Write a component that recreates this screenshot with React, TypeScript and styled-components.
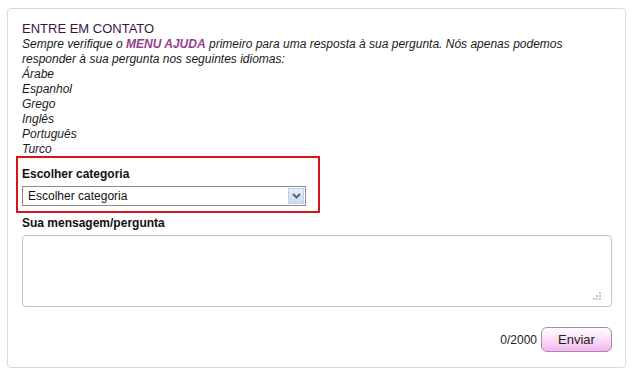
import styled, { createGlobalStyle } from 'styled-components';

const GlobalStyle = createGlobalStyle`
  html, body {
    margin: 0;
    padding: 0;
    background: #ffffff;
  }
  body {
    font-family: "Liberation Sans", Arial, sans-serif;
  }
`;

const Card = styled.div`
  margin: 8px 0 0 7px;
  width: 619px;
  height: 360px;
  box-sizing: border-box;
  border: 1px solid #d9d9d9;
  border-radius: 4px;
  padding: 12px 14px 0 14px;
  display: flex;
  flex-direction: column;
`;

const Title = styled.h2`
  margin: 0;
  font-size: 13px;
  line-height: 16px;
  font-weight: normal;
  color: #3c1640;
`;

const Intro = styled.p`
  margin: 0;
  font-size: 12px;
  line-height: 15px;
  font-style: italic;
  color: #1a1a1a;
`;

const HelpLink = styled.a`
  color: #93408f;
  font-weight: bold;
  text-decoration: none;
`;

const LangList = styled.ul`
  list-style: none;
  margin: 0;
  padding: 0;
  font-size: 12px;
  line-height: 15px;
  font-style: italic;
  color: #1a1a1a;
`;

const Highlight = styled.div`
  margin: -1px 0 0 -6px;
  width: 304px;
  height: 57px;
  box-sizing: border-box;
  border: 2px solid #d8141b;
  padding: 9px 4px 0 4px;
`;

const Label = styled.div`
  font-size: 12px;
  line-height: 15px;
  font-weight: bold;
  color: #111;
`;

const SelectBox = styled.div`
  margin-top: 4px;
  width: 284px;
  height: 20px;
  box-sizing: border-box;
  border: 1px solid #8c8c8c;
  display: flex;
  align-items: center;
  justify-content: space-between;
  padding: 0 1px 0 5px;
  font-size: 12px;
  color: #111;
`;

const ArrowButton = styled.span`
  width: 16px;
  height: 16px;
  box-sizing: border-box;
  border: 1px solid #c3cfe4;
  background: linear-gradient(#e9eff9, #cdd9ef);
  display: flex;
  align-items: center;
  justify-content: center;
`;

const MessageLabel = styled(Label)`
  margin-top: 3px;
`;

const TextArea = styled.div`
  position: relative;
  margin-top: 4px;
  width: 590px;
  height: 72px;
  box-sizing: border-box;
  border: 1px solid #c4c4c4;
  border-radius: 4px;
`;

const Grip = styled.svg`
  position: absolute;
  right: 9px;
  bottom: 5px;
`;

const Footer = styled.div`
  margin-top: 20px;
  width: 590px;
  display: flex;
  justify-content: flex-end;
  align-items: center;
  gap: 4px;
`;

const Counter = styled.span`
  font-size: 12px;
  color: #222;
`;

const SendButton = styled.button`
  width: 71px;
  height: 25px;
  box-sizing: border-box;
  border: 1px solid #b583b3;
  border-radius: 6px;
  background: linear-gradient(#ffffff 0%, #fbe4f8 40%, #f2b8ec 100%);
  font-family: "Liberation Sans", Arial, sans-serif;
  font-size: 13px;
  color: #222;
  padding: 0;
`;

const languages = ['Árabe', 'Espanhol', 'Grego', 'Inglês', 'Português', 'Turco'];

export default function App() {
  return (
    <>
      <GlobalStyle />
      <Card>
        <Title>ENTRE EM CONTATO</Title>
        <Intro>
          Sempre verifique o <HelpLink href="#">MENU AJUDA</HelpLink> primeiro para uma resposta à sua
          pergunta. Nós apenas podemos
          <br />
          responder à sua pergunta nos seguintes idiomas:
        </Intro>
        <LangList>
          {languages.map((l) => (
            <li key={l}>{l}</li>
          ))}
        </LangList>
        <Highlight>
          <Label>Escolher categoria</Label>
          <SelectBox>
            <span>Escolher categoria</span>
            <ArrowButton>
              <svg width="9" height="6" viewBox="0 0 9 6">
                <path d="M1 1 L4.5 4.5 L8 1" fill="none" stroke="#4d6185" strokeWidth="1.8" />
              </svg>
            </ArrowButton>
          </SelectBox>
        </Highlight>
        <MessageLabel>Sua mensagem/pergunta</MessageLabel>
        <TextArea>
          <Grip width="9" height="9" viewBox="0 0 9 9">
            <rect x="6" y="0" width="2" height="2" fill="#c8c8c8" />
            <rect x="3" y="3" width="2" height="2" fill="#c8c8c8" />
            <rect x="6" y="3" width="2" height="2" fill="#c8c8c8" />
            <rect x="0" y="6" width="2" height="2" fill="#c8c8c8" />
            <rect x="3" y="6" width="2" height="2" fill="#c8c8c8" />
            <rect x="6" y="6" width="2" height="2" fill="#c8c8c8" />
          </Grip>
        </TextArea>
        <Footer>
          <Counter>0/2000</Counter>
          <SendButton>Enviar</SendButton>
        </Footer>
      </Card>
    </>
  );
}
